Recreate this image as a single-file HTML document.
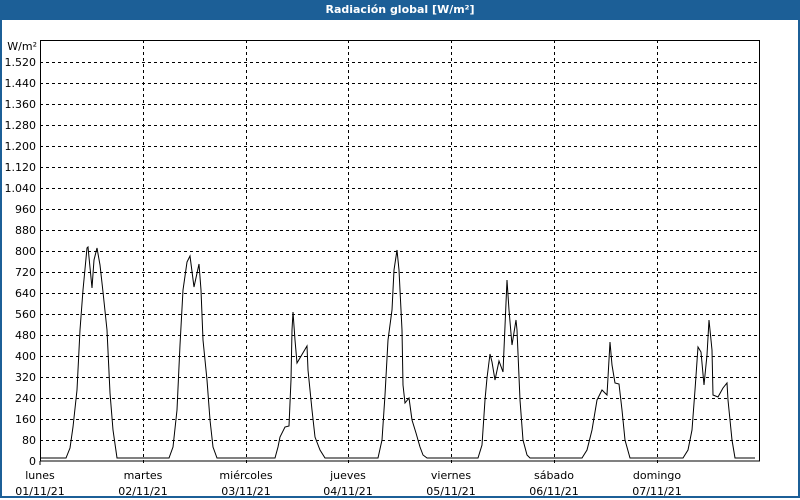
<!DOCTYPE html>
<html><head><meta charset="utf-8"><style>
html,body{margin:0;padding:0;background:#fff}
body{width:800px;height:500px;position:relative;overflow:hidden;font-family:"DejaVu Sans","Liberation Sans",sans-serif}
.frame{position:absolute;left:0;top:0;width:796px;height:496px;border:2px solid #1c5f97;border-top:none}
.title{position:absolute;left:0;top:0;width:800px;height:20px;background:#1c5f97;color:#fff;font-weight:bold;font-size:11px;line-height:20px;text-align:center}
svg{position:absolute;left:0;top:0}
</style></head><body>
<div class="frame"></div>
<div class="title">Radiación global [W/m²]</div>
<svg width="800" height="500" font-family="DejaVu Sans, Liberation Sans, sans-serif" font-size="11" fill="#000">
<g stroke="#000" stroke-width="1" stroke-dasharray="3,3" shape-rendering="crispEdges">
<line x1="40" x2="760" y1="440.5" y2="440.5"/><line x1="40" x2="760" y1="419.5" y2="419.5"/><line x1="40" x2="760" y1="398.5" y2="398.5"/><line x1="40" x2="760" y1="377.5" y2="377.5"/><line x1="40" x2="760" y1="356.5" y2="356.5"/><line x1="40" x2="760" y1="335.5" y2="335.5"/><line x1="40" x2="760" y1="314.5" y2="314.5"/><line x1="40" x2="760" y1="293.5" y2="293.5"/><line x1="40" x2="760" y1="272.5" y2="272.5"/><line x1="40" x2="760" y1="251.5" y2="251.5"/><line x1="40" x2="760" y1="230.5" y2="230.5"/><line x1="40" x2="760" y1="209.5" y2="209.5"/><line x1="40" x2="760" y1="188.5" y2="188.5"/><line x1="40" x2="760" y1="167.5" y2="167.5"/><line x1="40" x2="760" y1="146.5" y2="146.5"/><line x1="40" x2="760" y1="125.5" y2="125.5"/><line x1="40" x2="760" y1="104.5" y2="104.5"/><line x1="40" x2="760" y1="83.5" y2="83.5"/><line x1="40" x2="760" y1="62.5" y2="62.5"/>
<line x1="143.5" x2="143.5" y1="40" y2="465"/><line x1="246.5" x2="246.5" y1="40" y2="465"/><line x1="348.5" x2="348.5" y1="40" y2="465"/><line x1="451.5" x2="451.5" y1="40" y2="465"/><line x1="554.5" x2="554.5" y1="40" y2="465"/><line x1="657.5" x2="657.5" y1="40" y2="465"/>
</g>
<rect x="40.5" y="40.5" width="719" height="420.5" fill="none" stroke="#000" stroke-width="1" shape-rendering="crispEdges"/>
<line x1="40" x2="40" y1="461" y2="465" stroke="#000"/>
<g text-anchor="end">
<text x="36" y="465">0</text><text x="36" y="444">80</text><text x="36" y="423">160</text><text x="36" y="402">240</text><text x="36" y="381">320</text><text x="36" y="360">400</text><text x="36" y="339">480</text><text x="36" y="318">560</text><text x="36" y="297">640</text><text x="36" y="276">720</text><text x="36" y="255">800</text><text x="36" y="234">880</text><text x="36" y="213">960</text><text x="36" y="192">1.040</text><text x="36" y="171">1.120</text><text x="36" y="150">1.200</text><text x="36" y="129">1.280</text><text x="36" y="108">1.360</text><text x="36" y="87">1.440</text><text x="36" y="66">1.520</text><text x="37" y="50">W/m²</text>
</g>
<g text-anchor="middle">
<text x="40" y="479">lunes</text><text x="40" y="495">01/11/21</text>
<text x="143" y="479">martes</text><text x="143" y="495">02/11/21</text>
<text x="246" y="479">miércoles</text><text x="246" y="495">03/11/21</text>
<text x="348" y="479">jueves</text><text x="348" y="495">04/11/21</text>
<text x="451" y="479">viernes</text><text x="451" y="495">05/11/21</text>
<text x="554" y="479">sábado</text><text x="554" y="495">06/11/21</text>
<text x="657" y="479">domingo</text><text x="657" y="495">07/11/21</text>
</g>
<polyline fill="none" stroke="#000" stroke-width="1" points="41,458 66,458 70,448 73,427 77,390 80,330 83,290 87,248 88,247 92,288 94,260 97,248 100,265 103,292 107,330 110,393 113,430 117,458 169,458 173,447 177,410 180,345 183,290 187,262 190,256 194,287 199,264 201,290 203,340 207,380 210,420 213,447 217,458 275,458 278,447 280,437 285,427 289,426 291,380 292,330 293,312 295,340 297,363 307,346 308,370 312,410 315,437 320,450 325,458 378,458 382,440 385,395 388,340 392,310 394,270 397,250 399,270 402,330 403,385 405,403 409,398 412,420 416,433 420,447 423,455 427,458 478,458 482,445 485,400 487,378 490,354 492,362 495,380 499,361 503,372 507,280 509,310 512,345 516,320 517,330 520,400 523,440 527,455 530,458 582,458 587,450 592,430 597,400 602,390 607,395 610,342 612,365 615,383 619,384 622,410 625,440 630,458 683,458 688,450 692,430 695,390 698,347 701,352 704,385 707,355 709,320 712,350 713,395 718,397 723,388 727,383 728,400 732,440 735,458 755,458"/>
</svg>
</body></html>
